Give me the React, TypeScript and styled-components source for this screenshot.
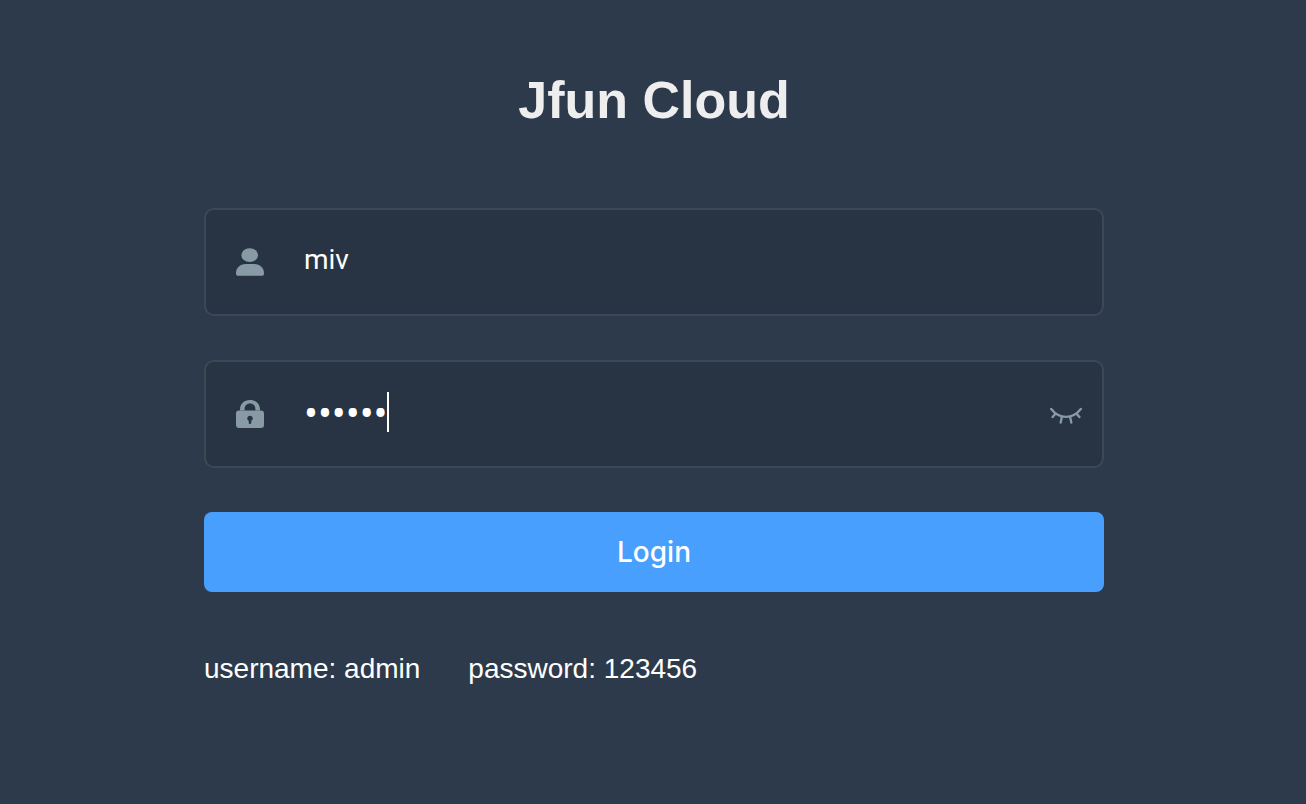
import React, { useState } from "react";
import styled, { createGlobalStyle } from "styled-components";

const GlobalStyle = createGlobalStyle`
  * {
    box-sizing: border-box;
  }

  body {
    margin: 0;
    background: #2d3a4b;
    font-family: "Liberation Sans", Arial, sans-serif;
  }
`;

const Page = styled.main`
  min-height: 100vh;
  display: flex;
  justify-content: center;
  padding: 70px 0 70px 2px;
`;

const LoginForm = styled.form`
  width: 100%;
  max-width: 900px;
  display: flex;
  flex-direction: column;
  gap: 44px;
`;

const Title = styled.h1`
  margin: 0 0 34px;
  color: #eeeeee;
  font-size: 52px;
  line-height: 60px;
  text-align: center;
`;

const Field = styled.div`
  display: flex;
  align-items: center;
  height: 108px;
  padding: 0 20px 0 30px;
  border: 2px solid #3c4855;
  border-radius: 10px;
  background: #283443;
`;

const FieldLabel = styled.label`
  display: flex;
  margin-right: 40px;
  color: #889aa4;
`;

const Entry = styled.div`
  flex: 1;
  min-width: 0;
  display: flex;
  align-items: center;
  padding-bottom: 4px;
`;

const TextInput = styled.input<{ $masked?: boolean }>`
  ${({ $masked }) => ($masked ? "field-sizing: content;" : "width: 100%;")}
  height: 40px;
  padding: 0;
  border: 0;
  outline: none;
  background: transparent;
  color: #ffffff;
  caret-color: transparent;
  font-family: ${({ $masked }) =>
    $masked ? '"Noto Sans", sans-serif' : "Roboto, sans-serif"};
  font-size: ${({ $masked }) => ($masked ? 37 : 28)}px;
  line-height: 40px;
`;

const Caret = styled.span`
  width: 2px;
  height: 40px;
  background: #ffffff;
`;

const RevealButton = styled.button`
  display: flex;
  padding: 0;
  border: 0;
  background: transparent;
  color: #889aa4;
  cursor: pointer;
`;

const SubmitButton = styled.button`
  height: 80px;
  border: 0;
  border-radius: 8px;
  background: #489ffd;
  color: #ffffff;
  font-family: Inter, sans-serif;
  font-size: 28px;
  font-weight: 500;
  line-height: 40px;
  cursor: pointer;
`;

const Hints = styled.div`
  display: flex;
  flex-wrap: wrap;
  gap: 48px;
  margin-top: 16px;
  color: #ffffff;
  font-size: 28px;
  line-height: 34px;
`;

const UserIcon = () => (
  <svg width="28" height="28" viewBox="0 0 28 28" fill="currentColor" aria-hidden="true">
    <ellipse cx="13.7" cy="7.1" rx="8.4" ry="6.900" />
    <path d="M0 25.2C0 20 4 16 9.8 16h8.4C24 16 28 20 28 25.2c0 1.9-.8 2.6-2.500 2.600h-23C.8 27.800 0 27.100 0 25.200Z" />
  </svg>
);

const LockIcon = () => (
  <svg width="28" height="28" viewBox="0 0 28 28" fill="currentColor" aria-hidden="true">
    <path d="M4 10.500V9.500C4 4 8 0 14 0s10 4 10 9.500v1h-4.600V9.500c0-3.700-2-5.900-5.400-5.900s-5.400 2.200-5.400 5.900v1Z" />
    <path
      fillRule="evenodd"
      d="M3 10.500h22a3 3 0 0 1 3 3V25a3 3 0 0 1-3 3H3a3 3 0 0 1-3-3V13.500a3 3 0 0 1 3-3ZM14 15.700a2.700 2.700 0 0 0-1.300 5.100v2a1.300 1.300 0 0 0 2.600 0v-2A2.700 2.700 0 0 0 14 15.700Z"
    />
  </svg>
);

const ClosedEyeIcon = () => (
  <svg
    width="32"
    height="20"
    viewBox="0 0 32 20"
    fill="none"
    stroke="currentColor"
    strokeWidth="2.3"
    strokeLinecap="round"
    aria-hidden="true"
  >
    <path d="M1.200 5c8.300 10.600 21.300 10.600 29.600 0M5.600 9.400 2.600 13M26.400 9.400l3 3.600M11.900 12.800l-1.200 5.800M20.100 12.800l1.200 5.800" />
  </svg>
);

export default function App() {
  const [username, setUsername] = useState("miv");
  const [password, setPassword] = useState("123456");
  const [visible, setVisible] = useState(false);

  return (
    <>
      <GlobalStyle />
      <Page>
        <LoginForm onSubmit={(event: React.FormEvent) => event.preventDefault()}>
          <Title>Jfun Cloud</Title>
          <Field>
            <FieldLabel htmlFor="username" aria-label="Username">
              <UserIcon />
            </FieldLabel>
            <Entry>
              <TextInput
                id="username"
                type="text"
                value={username}
                onChange={(event) => setUsername(event.target.value)}
              />
            </Entry>
          </Field>
          <Field>
            <FieldLabel htmlFor="password" aria-label="Password">
              <LockIcon />
            </FieldLabel>
            <Entry>
              <TextInput
                id="password"
                type={visible ? "text" : "password"}
                $masked={!visible}
                value={password}
                onChange={(event) => setPassword(event.target.value)}
              />
              {!visible && <Caret />}
            </Entry>
            <RevealButton
              type="button"
              aria-label="Show password"
              onClick={() => setVisible(!visible)}
            >
              <ClosedEyeIcon />
            </RevealButton>
          </Field>
          <SubmitButton type="submit">Login</SubmitButton>
          <Hints>
            <span>username: admin</span>
            <span>password: 123456</span>
          </Hints>
        </LoginForm>
      </Page>
    </>
  );
}
